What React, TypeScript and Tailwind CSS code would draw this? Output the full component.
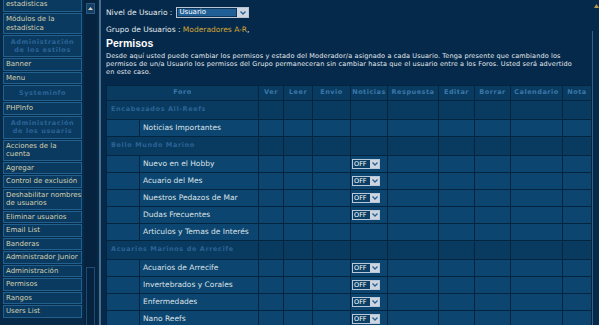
import React from "react";

const side: { t: string; h?: string; lines?: string[] }[] = [
  { t: "", lines: ["Módulos de la", "estadística"] },
  { t: "", h: "h-[22px]", lines: ["Administración", "de los estilos"] },
  { t: "Banner" },
  { t: "Menu" },
  { t: "", h: "h-[16px]", lines: ["Systeminfo"] },
  { t: "PHPInfo" },
  { t: "", h: "h-[23px]", lines: ["Administración", "de los usuaris"] },
  { t: "", lines: ["Acciones de la", "cuenta"] },
  { t: "Agregar" },
  { t: "Control de exclusión" },
  { t: "", lines: ["Deshabilitar nombres", "de usuarios"] },
  { t: "Eliminar usuarios" },
  { t: "Email List" },
  { t: "Banderas" },
  { t: "Administrador Junior" },
  { t: "Administración" },
  { t: "Permisos" },
  { t: "Rangos" },
  { t: "Users List" },
];

const cols = ["Ver", "Leer", "Envio", "Noticias", "Respuesta", "Editar", "Borrar", "Calendario", "Nota"];

const rows: { name: string; cat?: boolean; off?: boolean }[] = [
  { name: "Encabezados All-Reefs", cat: true },
  { name: "Noticias Importantes" },
  { name: "Bello Mundo Marino", cat: true },
  { name: "Nuevo en el Hobby", off: true },
  { name: "Acuario del Mes", off: true },
  { name: "Nuestros Pedazos de Mar", off: true },
  { name: "Dudas Frecuentes", off: true },
  { name: "Articulos y Temas de Interés" },
  { name: "Acuarios Marinos de Arrecife", cat: true },
  { name: "Acuarios de Arrecife", off: true },
  { name: "Invertebrados y Corales", off: true },
  { name: "Enfermedades", off: true },
  { name: "Nano Reefs", off: true },
];

function Chevron() {
  return (
    <svg width="6" height="4" viewBox="0 0 6 4">
      <path d="M0.5 0.5 L3 3 L5.5 0.5" stroke="#2a5f92" strokeWidth="1.3" fill="none" />
    </svg>
  );
}

function OffSelect() {
  return (
    <div className="flex h-[10px] w-[28px] border border-[#b8c8d8] bg-[#0c3f66]">
      <div className="flex-1 pl-[1px] text-[6.5px] leading-[8px] text-white">OFF</div>
      <div className="flex w-[9px] items-center justify-center bg-[#cdd6e0]">
        <Chevron />
      </div>
    </div>
  );
}

export default function App() {
  return (
    <div className="flex h-[325px] w-[599px] overflow-hidden bg-[#05294a] font-['DejaVu_Sans',sans-serif]">
      {/* sidebar */}
      <aside className="flex w-[101px] shrink-0 border-r-2 border-[#4d6f8e] bg-[#072a48]">
        <div className="flex w-[84px] flex-col gap-px pl-[3px] pr-[2px]">
          <div className="h-[12px] border border-t-0 border-[#24608e] bg-[#0a3a60] pl-[2px] text-[7px] leading-[9px] text-[#d6d0ae]">
            estadisticas
          </div>
          {side.map((s, i) =>
            s.h ? (
              <div
                key={i}
                className={`flex ${s.h} flex-col items-center justify-center border border-[#24608e] bg-[#0a3a60] text-[6.5px] font-bold leading-[8px] tracking-[0.6px] text-[#2a6497]`}
              >
                {s.lines!.map((l) => (
                  <span key={l}>{l}</span>
                ))}
              </div>
            ) : (
              <div
                key={i}
                className="whitespace-nowrap border border-[#24608e] bg-[#0a3a60] py-[1px] pl-[2px] text-[7px] leading-[8.5px] text-[#d6d0ae]"
              >
                {s.lines ? s.lines.map((l) => <div key={l}>{l}</div>) : s.t}
              </div>
            )
          )}
        </div>
        <div className="relative flex w-[13px] flex-col bg-[#05233e]">
          <div className="mx-[2px] mt-[3px] flex h-[11px] items-center justify-center border border-[#2b5b82] bg-[#143f63]">
            <svg width="5" height="3" viewBox="0 0 5 3">
              <path d="M0 3 L2.5 0 L5 3 Z" fill="#d8d4b8" />
            </svg>
          </div>
          <div className="flex-1" />
          <div className="mx-[2px] h-[58px] border border-b-0 border-[#1f4c72]" />
        </div>
      </aside>

      {/* main */}
      <main className="flex-1 pl-[5px] pt-[7px] text-[#e4e9ee]">
        <div className="flex items-center gap-[4px] text-[7.5px] leading-[10px]">
          <span>Nivel de Usuario :</span>
          <div className="flex h-[11px] w-[73px] border border-[#b8c4d0] bg-[#0b3458]">
            <div className="m-[1px] flex-1 bg-[#1f5f96] pl-[1px] text-[7px] leading-[7px] text-white">Usuario</div>
            <div className="flex w-[11px] items-center justify-center bg-[#cdd6e0]">
              <Chevron />
            </div>
          </div>
        </div>
        <div className="mt-[7px] text-[7.5px] leading-[10px]">
          Grupo de Usuarios : <span className="text-[#d3a637]">Moderadores A-R</span>,
        </div>
        <div className="mt-[2px] font-['Liberation_Sans',sans-serif] text-[10.5px] font-bold leading-[12px] text-white">
          Permisos
        </div>
        <p className="mt-[3px] pr-[14px] text-[6.5px] leading-[8px] tracking-[0.15px]">
          Desde aquí usted puede cambiar los permisos y estado del Moderador/a asignado a cada Usuario. Tenga presente que cambiando los
          permisos de un/a Usuario los permisos del Grupo permaneceran sin cambiar hasta que el usuario entre a los Foros. Usted será advertido en
          este caso.
        </p>

        <table className="mt-[9px] w-[486px] table-fixed border-separate border-spacing-[1px] bg-[#032540]">
          <colgroup>
            <col className="w-[32px]" />
            <col className="w-[118px]" />
            <col className="w-[24px]" />
            <col className="w-[28px]" />
            <col className="w-[37px]" />
            <col className="w-[36px]" />
            <col className="w-[50px]" />
            <col className="w-[35px]" />
            <col className="w-[35px]" />
            <col className="w-[51px]" />
            <col className="w-[28px]" />
          </colgroup>
          <thead>
            <tr className="h-[14px] bg-[#093a5f] text-[6.5px] font-bold tracking-[0.5px] text-[#3b77a9]">
              <th colSpan={2} className="font-bold">Foro</th>
              {cols.map((c) => (
                <th key={c} className="font-bold">{c}</th>
              ))}
            </tr>
          </thead>
          <tbody>
            {rows.map((r) =>
              r.cat ? (
                <tr key={r.name} className="h-[18px] bg-[#093a5f]">
                  <td colSpan={2} className="pl-[4px] text-[6.5px] font-bold tracking-[0.6px] text-[#2a6497]">
                    {r.name}
                  </td>
                  {cols.map((c) => (
                    <td key={c} />
                  ))}
                </tr>
              ) : (
                <tr key={r.name} className="h-[16px] bg-[#0b4570]">
                  <td />
                  <td className="pl-[3px] text-[7.5px] text-[#dde2e7]">{r.name}</td>
                  {cols.map((c) => (
                    <td key={c} className="pl-[1px]">
                      {c === "Noticias" && r.off ? <OffSelect /> : null}
                    </td>
                  ))}
                </tr>
              )
            )}
          </tbody>
        </table>
      </main>

      {/* right scrollbar */}
      <div className="flex w-[8px] shrink-0 flex-col bg-[#05294a]">
        <div className="mt-[4px] flex h-[7px] items-start justify-center">
          <svg width="5" height="4" viewBox="0 0 5 4">
            <path d="M0 4 L2.5 0 L5 4 Z" fill="#b89a4a" />
          </svg>
        </div>
        <div className="mt-[20px] flex-1 border-l border-[#3d6080]" />
      </div>
    </div>
  );
}
